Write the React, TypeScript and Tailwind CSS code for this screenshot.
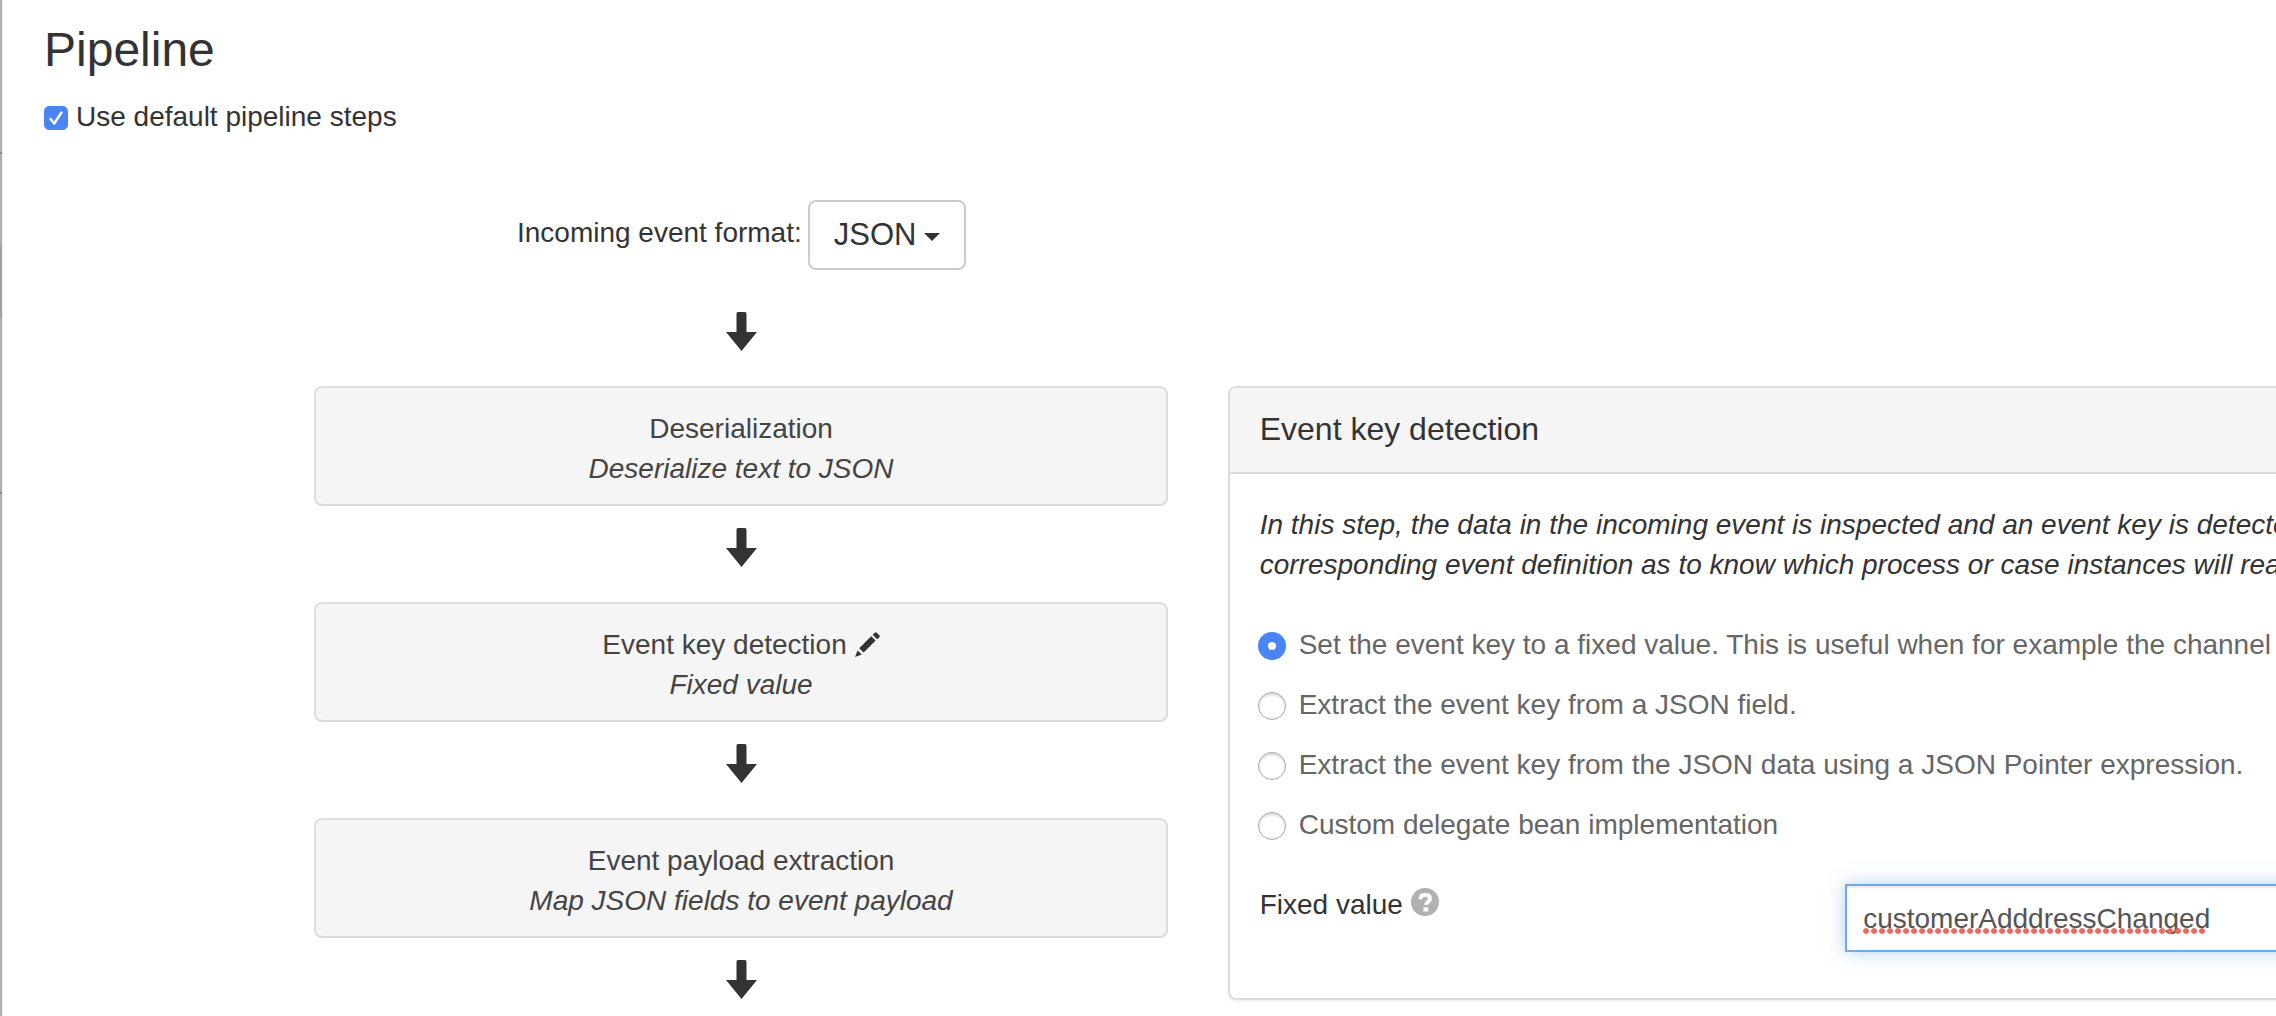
import { useState } from "react";

function ArrowDown() {
  return (
    <svg aria-hidden="true" viewBox="0 0 31 39" className="mx-auto mt-[22px] mb-[35px] block h-[39px] w-[31px] fill-[#333]">
      <path d="M10.5 1.5Q10.5 0 12 0H19Q20.5 0 20.5 1.5V20H31L15.5 39L0 20H10.5Z" />
    </svg>
  );
}

function Pencil() {
  return (
    <svg aria-hidden="true" viewBox="0 0 25 25" className="ml-2 inline-block size-[25px] fill-[#333] align-[-3px]">
      <path d="M0 25L2.6 18.4L6.8 22.4Z" />
      <path d="M4.2 16.2L16.2 4.2L20.6 8.6L8.6 20.6Z" />
      <path d="M17.6 2.8L19.8 .7Q20.8 -.2 21.8 .7L24.3 3.2Q25.2 4.2 24.3 5.2L22.1 7.3Z" />
    </svg>
  );
}

function Help() {
  return (
    <svg aria-hidden="true" viewBox="0 0 28 28" className="ml-2 inline-block size-7 align-[-2px]">
      <circle cx="14" cy="14" r="14" fill="#b1b1b1" />
      <path d="M9.5 11.2C9.5 8.2 11.4 6.8 14.2 6.8C17 6.8 19 8.2 19 10.8C19 14 15.2 13.8 15.2 16.8" fill="none" stroke="#fff" strokeWidth="4" />
      <rect x="12.4" y="19.3" width="4.8" height="4.2" fill="#fff" />
    </svg>
  );
}

const steps = [
  { name: "Deserialization", detail: "Deserialize text to JSON" },
  { name: "Event key detection", detail: "Fixed value", editable: true },
  { name: "Event payload extraction", detail: "Map JSON fields to event payload" },
];

const options = [
  "Set the event key to a fixed value. This is useful when for example the channel",
  "Extract the event key from a JSON field.",
  "Extract the event key from the JSON data using a JSON Pointer expression.",
  "Custom delegate bean implementation",
];

export default function App() {
  const [useDefault, setUseDefault] = useState(true);
  const [selected, setSelected] = useState(0);
  const [value, setValue] = useState("customerAdddressChanged");

  return (
    <div className="flex min-h-screen overflow-hidden bg-white font-['Liberation_Sans',Arial,sans-serif] text-[28px] leading-10 text-[#333]">
      <div
        aria-hidden="true"
        className="w-[3px] shrink-0 border-r border-[#ececec] bg-[linear-gradient(to_bottom,#b0b0b0_152px,#8c8c8c_152px_154px,#b0b0b0_154px_246px,#a0a0a0_246px_318px,#b0b0b0_318px_492px,#8c8c8c_492px_494px,#b0b0b0_494px)]"
      />
      <div className="min-w-0 flex-1">
        <header className="px-[41px] pt-5">
          <h1 className="text-5xl leading-[60px]">Pipeline</h1>
          <label className="mt-[17px] flex items-center gap-2">
            <span className="relative mt-0.5 flex size-6">
              <input
                type="checkbox"
                checked={useDefault}
                onChange={(e) => setUseDefault(e.target.checked)}
                className="peer size-6 appearance-none rounded-[5px] border border-[#b0b0b0] bg-white checked:border-[#4a85f5] checked:bg-[#4a85f5]"
              />
              <svg aria-hidden="true" viewBox="0 0 24 24" className="pointer-events-none absolute inset-0 hidden size-6 peer-checked:block">
                <path d="M6.5 13L10.2 17.5L17.5 6.5" fill="none" stroke="#fff" strokeWidth="2.4" strokeLinecap="round" strokeLinejoin="round" />
              </svg>
            </span>
            Use default pipeline steps
          </label>
        </header>

        <div className="mt-[63px] ml-[13.7%] w-[37.6%]">
          <div className="flex items-start justify-center gap-1.5">
            <span id="format-label" className="mt-[13px]">Incoming event format:</span>
            <button
              type="button"
              aria-labelledby="format-label"
              className="flex h-[70px] items-center gap-2 rounded-lg border-2 border-[#ccc] bg-white px-6 text-[31px]"
            >
              JSON
              <svg aria-hidden="true" viewBox="0 0 16 8" className="mt-1 h-2 w-4 fill-[#333]">
                <path d="M0 0H16L8 8Z" />
              </svg>
            </button>
          </div>
          <div className="pt-5">
            <ArrowDown />
          </div>
        </div>

        <main className="ml-[13.7%] flex items-start gap-[60px]">
          <section aria-label="Steps" className="w-[43.5%] shrink-0 text-center">
            {steps.map((step) => (
              <div key={step.name}>
                <div className="rounded-lg border-2 border-[#ddd] bg-[#f5f5f5] pt-[21px] pb-[15px] text-[#444]">
                  <p>
                    {step.name}
                    {step.editable && (
                      <button type="button" aria-label="Edit step">
                        <Pencil />
                      </button>
                    )}
                  </p>
                  <p className="italic">{step.detail}</p>
                </div>
                <ArrowDown />
              </div>
            ))}
          </section>

          <section className="w-[92.8%] shrink-0 rounded-lg border-2 border-[#ddd] bg-white shadow-[0_2px_2px_rgba(0,0,0,0.05)]">
            <h2 className="rounded-t-md border-b-2 border-[#ddd] bg-[#f5f5f5] px-[30px] pt-[21px] pb-[23px] text-[32px]">Event key detection</h2>
            <p className="px-[30px] pt-[31px] whitespace-nowrap italic">
              In this step, the data in the incoming event is inspected and an event key is detected
              <br />
              corresponding event definition as to know which process or case instances will react
            </p>
            <fieldset className="mt-10 flex flex-col gap-5 px-7 text-[#666]">
              {options.map((option, i) => (
                <label key={option} className="flex items-center gap-[13px] whitespace-nowrap">
                  <input
                    type="radio"
                    name="key-source"
                    checked={selected === i}
                    onChange={() => setSelected(i)}
                    className="mt-0.5 size-7 appearance-none rounded-full border border-[#a8a8a8] bg-white shadow-[inset_0_2px_2px_rgba(0,0,0,0.15)] checked:border-[10px] checked:border-[#4a85f5] checked:shadow-none"
                  />
                  {option}
                </label>
              ))}
            </fieldset>
            <div className="mt-[39px] grid grid-cols-3 px-[30px] pb-[46px]">
              <label htmlFor="fixed-value" className="pt-px">
                Fixed value
                <Help />
              </label>
              <div className="relative col-span-2">
                <input
                  id="fixed-value"
                  type="text"
                  spellCheck={false}
                  value={value}
                  onChange={(e) => setValue(e.target.value)}
                  className="block h-[68px] w-full border-2 border-[#73a9e8] bg-white px-4 pt-0.5 text-[#555] shadow-[inset_0_2px_2px_rgba(0,0,0,0.075),0_0_16px_rgba(102,165,233,0.5)] outline-none"
                />
                <span
                  aria-hidden="true"
                  className="pointer-events-none absolute top-11 left-[18px] h-1.5 w-[342px] bg-[radial-gradient(circle_at_3px_3px,#ee6a5f_2.5px,transparent_3.2px)] bg-[length:8px_6px]"
                />
              </div>
            </div>
          </section>
        </main>
      </div>
    </div>
  );
}
